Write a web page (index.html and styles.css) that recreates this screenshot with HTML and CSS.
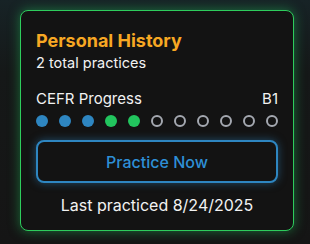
FILE: index.html
```html
<!DOCTYPE html>
<html>
<head>
<meta charset="utf-8">
<link rel="stylesheet" href="styles.css">
</head>
<body>
<div class="card">
  <div class="title">Personal History</div>
  <div class="total">2 total practices</div>
  <div class="progress-head">
    <span>CEFR Progress</span>
    <span>B1</span>
  </div>
  <div class="dots">
    <span class="dot blue"></span>
    <span class="dot blue"></span>
    <span class="dot blue"></span>
    <span class="dot green"></span>
    <span class="dot green"></span>
    <span class="dot empty"></span>
    <span class="dot empty"></span>
    <span class="dot empty"></span>
    <span class="dot empty"></span>
    <span class="dot empty"></span>
    <span class="dot empty"></span>
  </div>
  <button class="practice">Practice Now</button>
  <div class="last">Last practiced 8/24/2025</div>
</div>
</body>
</html>
```
FILE: styles.css
```css
html, body {
  margin: 0;
  padding: 0;
}
body {
  width: 310px;
  height: 244px;
  background: linear-gradient(180deg, #172326 0%, #151818 30%, #151515 100%);
  font-family: Inter, "Noto Sans", sans-serif;
  color: #f2f2f2;
  padding: 10px 16px 0 20px;
  box-sizing: border-box;
  overflow: hidden;
}
.card {
  width: 274px;
  height: 221px;
  box-sizing: border-box;
  border: 1px solid #2ecc5c;
  border-radius: 8px;
  background: #131313;
  box-shadow: 0 0 12px rgba(34, 197, 94, 0.5);
  padding: 18px 15px 0 15px;
  display: flex;
  flex-direction: column;
}
.title {
  color: #f7a823;
  font-weight: 700;
  font-size: 18px;
  line-height: 23px;
}
.total {
  font-size: 14.5px;
  line-height: 20px;
  margin-top: 1px;
}
.progress-head {
  display: flex;
  justify-content: space-between;
  font-size: 15px;
  line-height: 20px;
  margin-top: 16px;
}
.dots {
  display: flex;
  justify-content: space-between;
  margin-top: 6px;
}
.dot {
  width: 12px;
  height: 12px;
  border-radius: 50%;
  box-sizing: border-box;
}
.dot.blue { background: #2e86c1; }
.dot.green { background: #22c55e; }
.dot.empty { border: 2px solid #a4a8b0; }
.practice {
  margin-top: 13px;
  height: 43px;
  border: 2px solid #2e86c1;
  border-radius: 8px;
  background: #131313;
  color: #2e8fd6;
  font-family: Inter, "Noto Sans", sans-serif;
  font-size: 16px;
  font-weight: 500;
  box-shadow: 0 0 8px rgba(46, 134, 193, 0.5);
  padding: 0;
}
.last {
  text-align: center;
  font-size: 16px;
  line-height: 20px;
  margin-top: 12px;
}
```
